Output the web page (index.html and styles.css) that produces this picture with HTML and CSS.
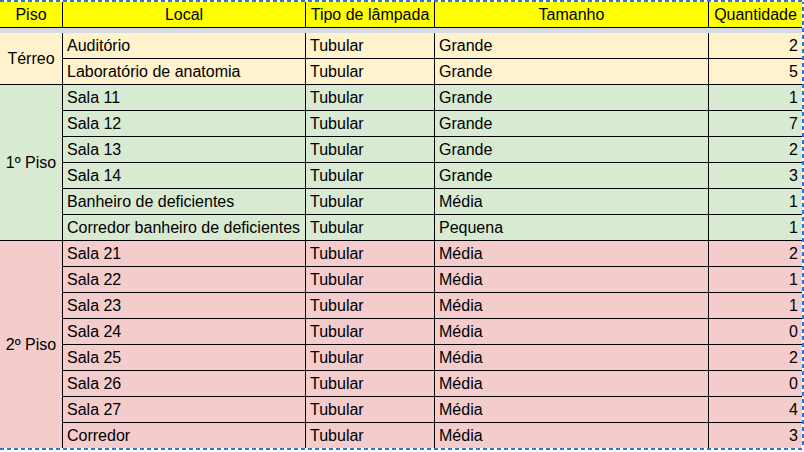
FILE: index.html
```html
<!DOCTYPE html>
<html lang="pt">
<head>
<meta charset="utf-8">
<title>Lâmpadas</title>
<link rel="stylesheet" href="styles.css">
</head>
<body>
<div class="sheet">
  <div class="grid head">
    <div class="h">Piso</div>
    <div class="h">Local</div>
    <div class="h">Tipo de lâmpada</div>
    <div class="h">Tamanho</div>
    <div class="h">Quantidade</div>
  </div>
  <div class="band"></div>
  <div class="grid body">
    <div class="piso cream span2">Térreo</div>
    <div class="c cream">Auditório</div><div class="c cream">Tubular</div><div class="c cream">Grande</div><div class="c n cream">2</div>
    <div class="c cream">Laboratório de anatomia</div><div class="c cream">Tubular</div><div class="c cream">Grande</div><div class="c n cream">5</div>

    <div class="piso green span6">1º Piso</div>
    <div class="c green">Sala 11</div><div class="c green">Tubular</div><div class="c green">Grande</div><div class="c n green">1</div>
    <div class="c green">Sala 12</div><div class="c green">Tubular</div><div class="c green">Grande</div><div class="c n green">7</div>
    <div class="c green">Sala 13</div><div class="c green">Tubular</div><div class="c green">Grande</div><div class="c n green">2</div>
    <div class="c green">Sala 14</div><div class="c green">Tubular</div><div class="c green">Grande</div><div class="c n green">3</div>
    <div class="c green">Banheiro de deficientes</div><div class="c green">Tubular</div><div class="c green">Média</div><div class="c n green">1</div>
    <div class="c green">Corredor banheiro de deficientes</div><div class="c green">Tubular</div><div class="c green">Pequena</div><div class="c n green">1</div>

    <div class="piso pink span8">2º Piso</div>
    <div class="c pink">Sala 21</div><div class="c pink">Tubular</div><div class="c pink">Média</div><div class="c n pink">2</div>
    <div class="c pink">Sala 22</div><div class="c pink">Tubular</div><div class="c pink">Média</div><div class="c n pink">1</div>
    <div class="c pink">Sala 23</div><div class="c pink">Tubular</div><div class="c pink">Média</div><div class="c n pink">1</div>
    <div class="c pink">Sala 24</div><div class="c pink">Tubular</div><div class="c pink">Média</div><div class="c n pink">0</div>
    <div class="c pink">Sala 25</div><div class="c pink">Tubular</div><div class="c pink">Média</div><div class="c n pink">2</div>
    <div class="c pink">Sala 26</div><div class="c pink">Tubular</div><div class="c pink">Média</div><div class="c n pink">0</div>
    <div class="c pink">Sala 27</div><div class="c pink">Tubular</div><div class="c pink">Média</div><div class="c n pink">4</div>
    <div class="c pink">Corredor</div><div class="c pink">Tubular</div><div class="c pink">Média</div><div class="c n pink">3</div>
  </div>
</div>
</body>
</html>
```
FILE: styles.css
```css
html, body {
  margin: 0;
  padding: 0;
  background: #ffffff;
}

body {
  font-family: "Liberation Sans", Arial, sans-serif;
  font-size: 16px;
  color: #000000;
}

.sheet {
  position: relative;
  width: 804px;
  box-sizing: border-box;
  padding: 2px 2px 1px 0;
}

.sheet::after {
  content: "";
  position: absolute;
  inset: 0;
  pointer-events: none;
  background:
    repeating-linear-gradient(90deg, #2c74d8 0 4px, #ffffff 4px 7px) top left / 100% 2px no-repeat,
    repeating-linear-gradient(90deg, #2c74d8 0 4px, #ffffff 4px 7px) bottom left / 100% 2px no-repeat,
    repeating-linear-gradient(180deg, #2c74d8 0 4px, #ffffff 4px 7px) top right / 2px 100% no-repeat;
}

.grid {
  display: grid;
  grid-template-columns: 62px 242px 128px 273px 93px;
  gap: 1px;
  background: #000000;
  border-bottom: 1px solid #000000;
}

.head {
  grid-auto-rows: 25px;
}

.h {
  background: #ffff00;
  text-align: center;
  line-height: 25px;
  white-space: nowrap;
  overflow: hidden;
}

.band {
  height: 5px;
  background: #d6dce4;
}

.body {
  grid-auto-rows: 25px;
}

.c {
  line-height: 25px;
  padding: 0 4px;
  white-space: nowrap;
  overflow: hidden;
}

.n {
  text-align: right;
}

.piso {
  grid-column: 1;
  display: flex;
  align-items: center;
  justify-content: center;
  white-space: nowrap;
}

.span2 { grid-row: span 2; }
.span6 { grid-row: span 6; }
.span8 { grid-row: span 8; }

.cream { background: #fff2cc; }
.green { background: #d9ead3; }
.pink { background: #f4cccc; }
```
